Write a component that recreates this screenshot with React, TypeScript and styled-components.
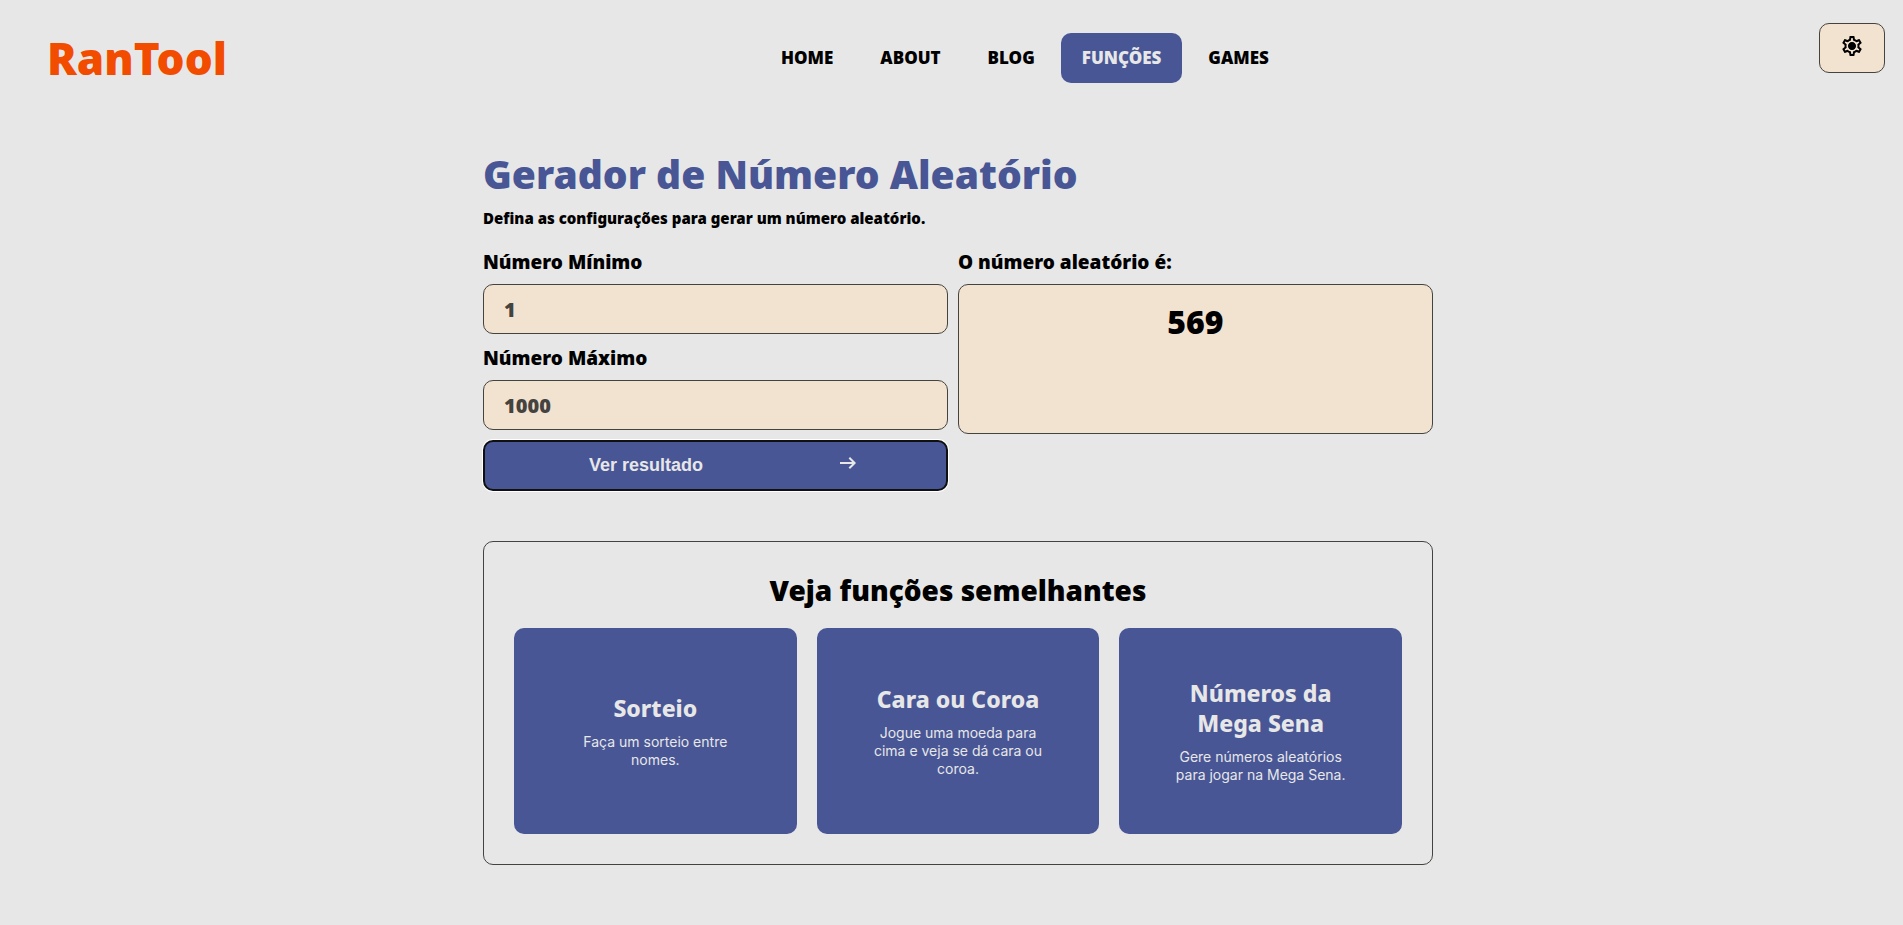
import React, { useState } from 'react';
import styled, { createGlobalStyle, css } from 'styled-components';
import { MdOutlineSettings } from 'react-icons/md';

const color = {
  page: '#e7e7e7',
  primary: '#485696',
  accent: '#f24c00',
  field: '#f2e2d0',
  line: '#45433f',
  ink: '#000000',
};

const GlobalStyle = createGlobalStyle`
  *, *::before, *::after { box-sizing: border-box; }
  body {
    margin: 0;
    background: ${color.page};
    color: ${color.ink};
    font-family: "Noto Sans", "Open Sans", sans-serif;
    font-weight: 900;
  }
  h1, h2, h3, p { margin: 0; }
`;

const panel = css`
  border: 1px solid ${color.line};
  border-radius: 10px;
`;

const Header = styled.header`
  display: flex;
  align-items: center;
  justify-content: space-between;
  padding: 23px 18px 0 47px;
`;

const Logo = styled.a`
  padding-right: 4px;
  color: ${color.accent};
  font-size: 44px;
  line-height: 70px;
  text-decoration: none;
`;

const Nav = styled.nav`
  display: flex;
  flex-wrap: wrap;
  gap: 5px;
`;

const NavLink = styled.a<{ $active?: boolean }>`
  padding: 0 21px;
  border-radius: 10px;
  background: ${({ $active }) => ($active ? color.primary : 'transparent')};
  color: ${({ $active }) => ($active ? color.page : color.ink)};
  font-size: 17px;
  line-height: 50px;
  text-decoration: none;
`;

const SettingsButton = styled.button`
  ${panel}
  align-self: flex-start;
  display: flex;
  justify-content: center;
  padding: 10px 20px 14px;
  width: 66px;
  height: 50px;
  background: ${color.field};
  color: ${color.ink};
  cursor: pointer;
`;

const Main = styled.main`
  display: flex;
  flex-direction: column;
  max-width: 963px;
  margin: 0 auto;
  padding: 57px 0 60px 13px;
`;

const Title = styled.h1`
  color: ${color.primary};
  font-size: 39px;
  font-weight: 900;
  line-height: 48px;
`;

const Subtitle = styled.p`
  margin: 8px 0 18px;
  font-size: 15px;
  line-height: 24px;
`;

const Generator = styled.div`
  display: grid;
  grid-template-columns: 465fr 475fr;
  align-items: start;
  gap: 10px;
`;

const Form = styled.form`
  display: flex;
  flex-direction: column;
  gap: 10px;
`;

const Label = styled.label`
  padding-top: 2px;
  font-size: 19px;
  line-height: 24px;
`;

const NumberInput = styled.input`
  ${panel}
  width: 100%;
  height: 50px;
  padding: 0 20px;
  background: ${color.field};
  color: ${color.ink};
  font: inherit;
  font-size: 20px;
  appearance: textfield;

  &::placeholder { color: ${color.line}; opacity: 1; }
`;

const SubmitButton = styled.button`
  display: flex;
  align-items: center;
  justify-content: center;
  gap: 133px;
  height: 51px;
  padding: 0 0 0 18px;
  border: 2px solid #101010;
  border-radius: 10px;
  box-shadow: 0 0 0 1px #ffffff;
  background: ${color.primary};
  color: ${color.page};
  font: bold 18px "Liberation Sans", Arial, sans-serif;
  cursor: pointer;

  svg { margin-bottom: 5px; }
`;

const ResultColumn = styled.div`
  display: flex;
  flex-direction: column;
  gap: 10px;
`;

const Result = styled.output`
  ${panel}
  display: block;
  min-height: 150px;
  padding: 15px 20px;
  background: ${color.field};
  font-size: 32px;
  line-height: 44px;
  text-align: center;
`;

const Related = styled.section`
  ${panel}
  margin-top: 50px;
  padding: 30px;
`;

const RelatedTitle = styled.h2`
  margin-bottom: 20px;
  font-size: 28px;
  font-weight: 900;
  line-height: 36px;
  text-align: center;
`;

const CardGrid = styled.div`
  display: grid;
  grid-template-columns: repeat(3, 1fr);
  gap: 20px;
`;

const Card = styled.a`
  display: flex;
  flex-direction: column;
  justify-content: center;
  gap: 10px;
  min-height: 206px;
  padding: 20px 50px;
  border-radius: 10px;
  background: ${color.primary};
  color: ${color.page};
  text-align: center;
  text-decoration: none;
`;

const CardTitle = styled.h3`
  font-size: 23px;
  font-weight: 800;
  line-height: 30px;
`;

const CardText = styled.p`
  font: 400 14px/18px Inter, sans-serif;
`;

const navItems = ['HOME', 'ABOUT', 'BLOG', 'FUNÇÕES', 'GAMES'];

const relatedTools = [
  { title: 'Sorteio', text: 'Faça um sorteio entre nomes.' },
  { title: 'Cara ou Coroa', text: 'Jogue uma moeda para cima e veja se dá cara ou coroa.' },
  { title: 'Números da Mega Sena', text: 'Gere números aleatórios para jogar na Mega Sena.' },
];

function GearIcon() {
  return (
    <svg width="24" height="24" viewBox="0 0 24 24" aria-hidden="true">
      <MdOutlineSettings size={24} />
      <circle cx="12" cy="12" r="3.5" fill="currentColor" />
    </svg>
  );
}

function ArrowIcon() {
  return (
    <svg
      width="24"
      height="24"
      viewBox="0 0 24 24"
      fill="none"
      stroke="currentColor"
      strokeWidth="2"
      aria-hidden="true"
    >
      <path d="M4 12h15M13.3 6.7l5.3 5.3-5.3 5.3" />
    </svg>
  );
}

export default function App() {
  const [min, setMin] = useState('');
  const [max, setMax] = useState('');
  const [result, setResult] = useState(569);

  const generate = (event: React.FormEvent) => {
    event.preventDefault();
    const low = Number(min || 1);
    const high = Number(max || 1000);
    setResult(Math.floor(Math.random() * (high - low + 1)) + low);
  };

  return (
    <>
      <GlobalStyle />
      <Header>
        <Logo href="#">RanTool</Logo>
        <Nav>
          {navItems.map((item) => (
            <NavLink key={item} href="#" $active={item === 'FUNÇÕES'}>
              {item}
            </NavLink>
          ))}
        </Nav>
        <SettingsButton type="button" aria-label="Configurações">
          <GearIcon />
        </SettingsButton>
      </Header>

      <Main>
        <Title>Gerador de Número Aleatório</Title>
        <Subtitle>Defina as configurações para gerar um número aleatório.</Subtitle>

        <Generator>
          <Form onSubmit={generate}>
            <Label htmlFor="min">Número Mínimo</Label>
            <NumberInput
              id="min"
              type="number"
              placeholder="1"
              value={min}
              onChange={(e) => setMin(e.target.value)}
            />
            <Label htmlFor="max">Número Máximo</Label>
            <NumberInput
              id="max"
              type="number"
              placeholder="1000"
              value={max}
              onChange={(e) => setMax(e.target.value)}
            />
            <SubmitButton type="submit">
              Ver resultado
              <ArrowIcon />
            </SubmitButton>
          </Form>

          <ResultColumn>
            <Label htmlFor="result">O número aleatório é:</Label>
            <Result id="result">{result}</Result>
          </ResultColumn>
        </Generator>

        <Related>
          <RelatedTitle>Veja funções semelhantes</RelatedTitle>
          <CardGrid>
            {relatedTools.map((tool) => (
              <Card key={tool.title} href="#">
                <CardTitle>{tool.title}</CardTitle>
                <CardText>{tool.text}</CardText>
              </Card>
            ))}
          </CardGrid>
        </Related>
      </Main>
    </>
  );
}
